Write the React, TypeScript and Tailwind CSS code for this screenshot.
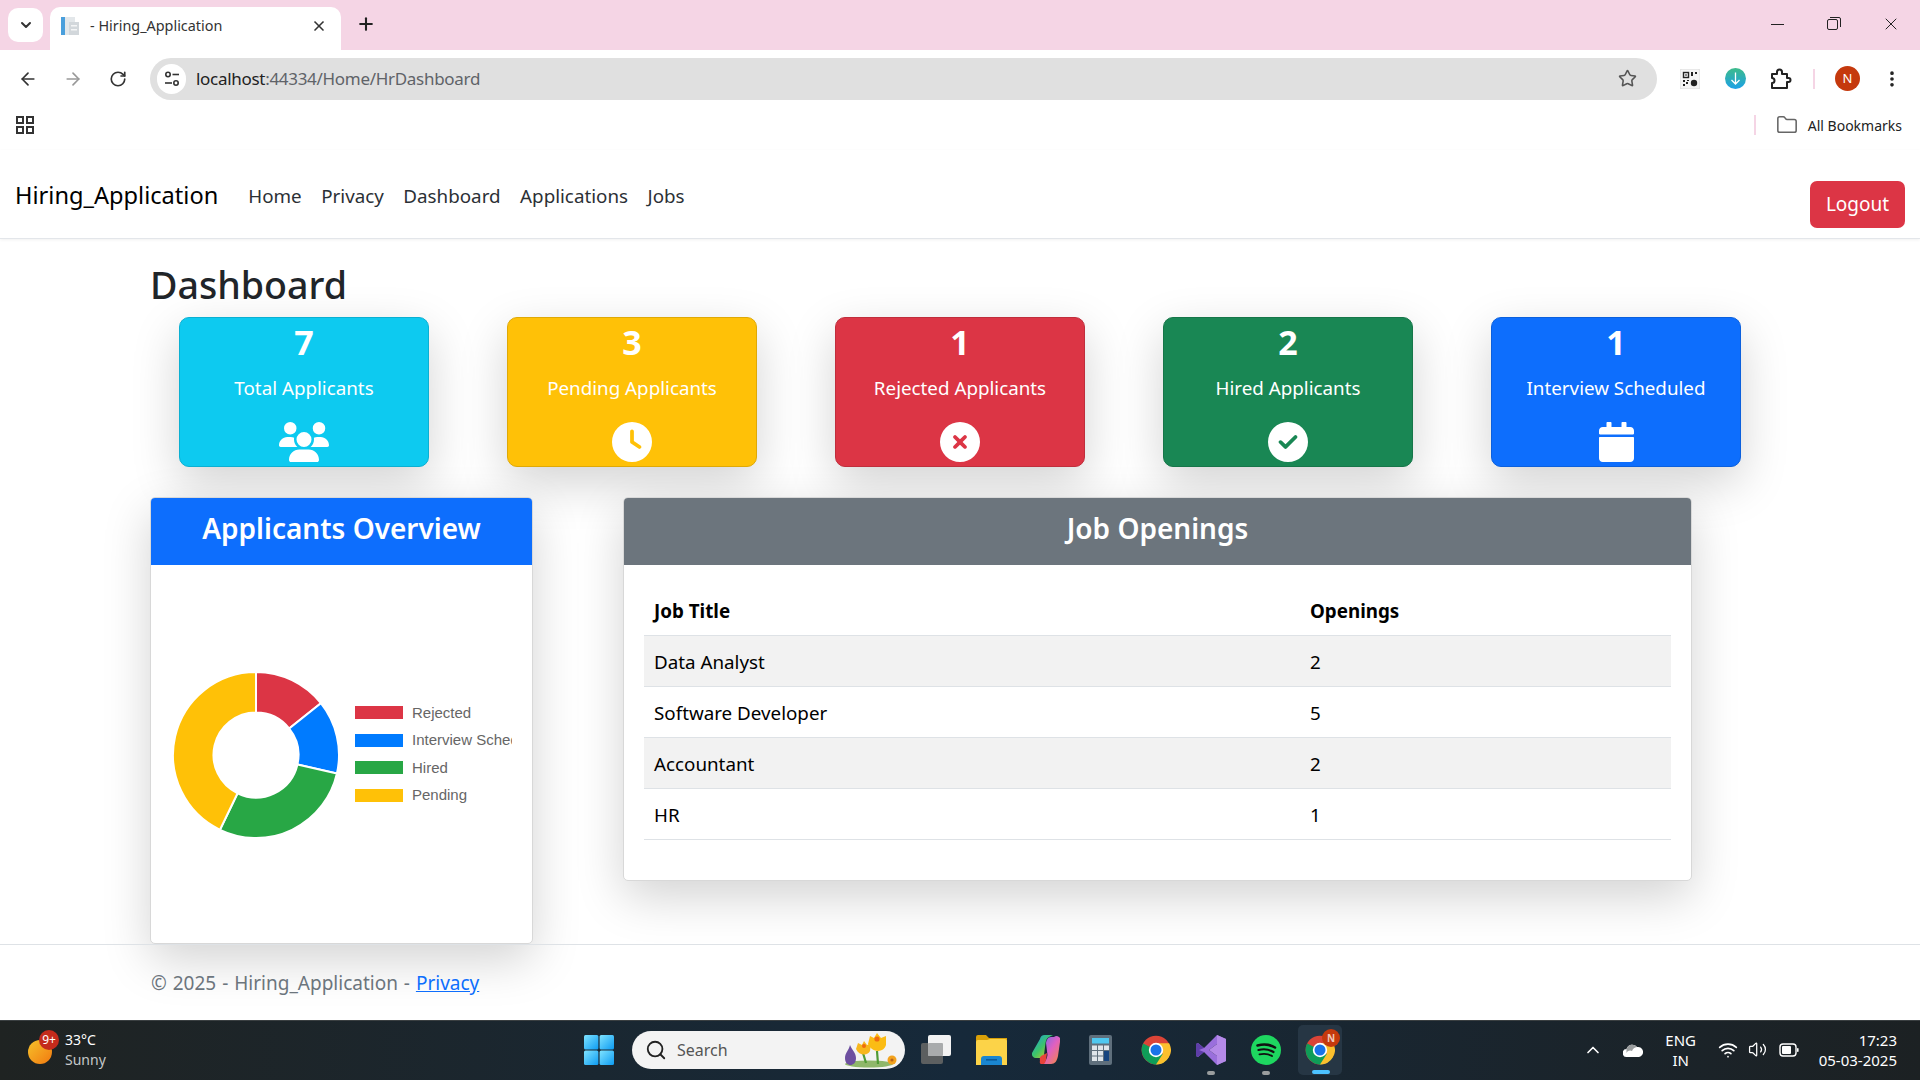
import React from 'react';
import { ArrowLeft, ArrowRight, RotateCw, Star, X, Plus, ChevronDown, ChevronUp, Folder, EllipsisVertical, Search, Wifi, Volume2 } from 'lucide-react';
import { FaCalendar } from 'react-icons/fa';
import { FaUsers, FaClock, FaCircleXmark, FaCircleCheck } from 'react-icons/fa6';

const stats = [
  { value: '7', label: 'Total Applicants', bg: 'bg-[#0dcaf0] border-[#0bb0d2]', icon: <FaUsers className="w-[50px] h-[40px]" /> },
  { value: '3', label: 'Pending Applicants', bg: 'bg-[#ffc107] border-[#dfa906]', icon: <FaClock className="w-[40px] h-[40px]" /> },
  { value: '1', label: 'Rejected Applicants', bg: 'bg-[#dc3545] border-[#c02e3c]', icon: <FaCircleXmark className="w-[40px] h-[40px]" /> },
  { value: '2', label: 'Hired Applicants', bg: 'bg-[#198754] border-[#167649]', icon: <FaCircleCheck className="w-[40px] h-[40px]" /> },
  { value: '1', label: 'Interview Scheduled', bg: 'bg-[#0d6efd] border-[#0b60dd]', icon: <FaCalendar className="w-[35px] h-[40px]" /> },
];

const jobs = [
  { title: 'Data Analyst', openings: 2 },
  { title: 'Software Developer', openings: 5 },
  { title: 'Accountant', openings: 2 },
  { title: 'HR', openings: 1 },
];

const legend = [
  { label: 'Rejected', color: 'bg-[#dc3545]' },
  { label: 'Interview Scheduled', color: 'bg-[#007bff]' },
  { label: 'Hired', color: 'bg-[#28a745]' },
  { label: 'Pending', color: 'bg-[#ffc107]' },
];

const slices = [
  { value: 1, color: '#dc3545' },
  { value: 1, color: '#007bff' },
  { value: 2, color: '#28a745' },
  { value: 3, color: '#ffc107' },
];

const polar = (r: number, a: number) => {
  const t = (a - 90) * (Math.PI / 180);
  return `${(84 + r * Math.cos(t)).toFixed(2)} ${(84 + r * Math.sin(t)).toFixed(2)}`;
};

const Donut = () => {
  let start = 0;
  return (
    <svg width="168" height="168" viewBox="0 0 168 168" className="shrink-0 mt-[1px]">
      {slices.map((s, i) => {
        const end = start + (s.value / 7) * 360;
        const large = end - start > 180 ? 1 : 0;
        const d = `M ${polar(83, start)} A 83 83 0 ${large} 1 ${polar(83, end)} L ${polar(42.5, end)} A 42.5 42.5 0 ${large} 0 ${polar(42.5, start)} Z`;
        start = end;
        return <path key={i} d={d} fill={s.color} stroke="#fff" strokeWidth="2" />;
      })}
    </svg>
  );
};

const ChromeLogo = ({ size = 30 }: { size?: number }) => (
  <svg width={size} height={size} viewBox="0 0 48 48">
    <circle cx="24" cy="24" r="23" fill="#db4437" />
    <path d="M24 24 L44 36 A23 23 0 0 1 13 44 Z" fill="#0f9d58" />
    <path d="M3.5 13.5 A23 23 0 0 0 24 47 L24 24 Z" fill="#0f9d58" />
    <path d="M24 13 H45 A23 23 0 0 1 24 47 L35 30 Z" fill="#fbc02d" />
    <circle cx="24" cy="24" r="11.5" fill="#fff" />
    <circle cx="24" cy="24" r="8.8" fill="#1a73e8" />
  </svg>
);

const WindowsLogo = () => (
  <svg width="30" height="30" viewBox="0 0 30 30">
    <defs>
      <linearGradient id="win" x1="0" y1="0" x2="1" y2="1">
        <stop offset="0" stopColor="#7fe3ff" />
        <stop offset="1" stopColor="#0d9bf2" />
      </linearGradient>
    </defs>
    <rect x="0" y="0" width="14.4" height="14.4" rx="1.5" fill="url(#win)" />
    <rect x="15.6" y="0" width="14.4" height="14.4" rx="1.5" fill="url(#win)" />
    <rect x="0" y="15.6" width="14.4" height="14.4" rx="1.5" fill="url(#win)" />
    <rect x="15.6" y="15.6" width="14.4" height="14.4" rx="1.5" fill="url(#win)" />
  </svg>
);

const TaskView = () => (
  <svg width="30" height="30" viewBox="0 0 30 30">
    <rect x="0" y="8" width="22" height="21" rx="2" fill="#5c5f60" />
    <rect x="7" y="0" width="23" height="21" rx="2" fill="#f2f2f2" />
    <rect x="7" y="8" width="15" height="13" rx="1" fill="#a9abac" />
  </svg>
);

const Explorer = () => (
  <svg width="31" height="30" viewBox="0 0 31 30">
    <path d="M0 2 a2 2 0 0 1 2-2 h8 l3 3 h18 v6 H0 Z" fill="#d9a008" />
    <path d="M0 7 a2 2 0 0 1 2-2 h9 l3-1 h15 a2 2 0 0 1 2 2 v24 H0 Z" fill="#fcd348" />
    <path d="M5 30 v-6 a3 3 0 0 1 3-3 h15 a3 3 0 0 1 3 3 v6 Z" fill="#1a86d0" />
    <rect x="10" y="24" width="11" height="1.6" fill="#0b5a9a" />
  </svg>
);

const Copilot = () => (
  <svg width="28" height="30" viewBox="0 0 28 30">
    <defs>
      <linearGradient id="cop1" x1="0" y1="0" x2="1" y2="1">
        <stop offset="0" stopColor="#18a0e8" />
        <stop offset="0.5" stopColor="#3dc468" />
        <stop offset="1" stopColor="#f5c518" />
      </linearGradient>
      <linearGradient id="cop2" x1="0" y1="0" x2="1" y2="1">
        <stop offset="0" stopColor="#6a6cf0" />
        <stop offset="0.5" stopColor="#e060c0" />
        <stop offset="1" stopColor="#f58a3a" />
      </linearGradient>
    </defs>
    <path d="M8 4 a5 5 0 0 1 5-4 h8 l-4 2 c-2 1-3 3-3.5 6 L12 20 c-.5 2-2 3-4 3 H4 a4 4 0 0 1-4-5 Z" fill="url(#cop1)" />
    <path d="M14 8 c.5-3 2-6 5-6 h3 a4 4 0 0 1 6 5 l-2 14 c-1 5-3 8-7 8 H9 l3-2 c2-1 3-4 3.5-7 Z" fill="url(#cop2)" />
    <path d="M8 26 a5 5 0 0 1 3-6 l4-2 -1 7 c-.5 2-1 3-2 4 h-2 a2 2 0 0 1-2-3 Z" fill="#e8433a" />
  </svg>
);

const Calculator = () => (
  <svg width="23" height="30" viewBox="0 0 23 30">
    <rect width="23" height="30" rx="2" fill="#5f6f7c" />
    <rect x="3" y="3" width="17" height="5.5" fill="#4fc8f0" />
    {[10.5, 16, 21.5].map(y => [3, 9, 15].map(x => (
      x === 15 && y > 12 ? null : <rect key={`${x}-${y}`} x={x} y={y} width="5" height="4.5" fill="#dfe5ea" />
    )))}
    <rect x="15" y="16" width="5" height="10" fill="#17457f" />
  </svg>
);

const VisualStudio = () => (
  <svg width="30" height="30" viewBox="0 0 30 30">
    <path d="M21 0 L30 4 V26 L21 30 L8 17 L2 22 L0 21 V9 L2 8 L8 13 Z M21 9 L13 15 L21 21 Z" fill="#9a6fdc" fillRule="evenodd" />
    <path d="M21 0 L30 4 V26 L21 30 Z M21 9 V21 L13 15 Z" fill="#b58ae8" fillRule="evenodd" />
    <path d="M2 8 L8 13 L3 15 L8 17 L2 22 L0 21 V9 Z" fill="#5e3ea8" />
  </svg>
);

const Spotify = () => (
  <svg width="30" height="30" viewBox="0 0 30 30" fill="none">
    <circle cx="15" cy="15" r="15" fill="#1ed760" />
    <path d="M6.5 10.5 C12 9 19 9.5 24 12.5" stroke="#111" strokeWidth="2.6" strokeLinecap="round" />
    <path d="M7.5 15 C12 13.8 18 14.3 22.5 17" stroke="#111" strokeWidth="2.2" strokeLinecap="round" />
    <path d="M8.5 19.4 C12.5 18.5 17.5 18.9 21 21" stroke="#111" strokeWidth="1.9" strokeLinecap="round" />
  </svg>
);

const Flowers = () => (
  <svg width="56" height="38" viewBox="0 0 56 38">
    <ellipse cx="25" cy="33" rx="24" ry="3.5" fill="#8fb76a" />
    <path d="M1 27 C1 22 5 19 6 14 C8 19 12 22 12 27 C12 32 9 34 6.5 34 C4 34 1 32 1 27 Z" fill="#6d4fa0" />
    <path d="M22 32 L19 22 M34 33 L33 20" stroke="#4f9a35" strokeWidth="2.2" />
    <path d="M12 18 L14 12 L18 14 L20 10 L23 14 L27 13 L26 20 C24 25 15 25 12 18 Z" fill="#f7b71d" />
    <circle cx="20" cy="15" r="2" fill="#ef6c10" />
    <path d="M24 13 L26 5 L30 7 L33 2 L37 7 L42 5 L42 14 C40 22 28 22 24 13 Z" fill="#fbbc14" />
    <circle cx="33" cy="8" r="2.6" fill="#ef6c10" />
    <circle cx="48" cy="29" r="4.5" fill="#f2a21e" />
    <circle cx="48" cy="29" r="1.6" fill="#b9641a" />
  </svg>
);

const TunePill = () => (
  <svg width="18" height="18" viewBox="0 0 18 18" fill="none" stroke="#333" strokeWidth="1.6">
    <circle cx="5" cy="4.5" r="2.2" />
    <path d="M9.5 4.5 H16" />
    <path d="M2 13 H9" />
    <circle cx="13" cy="13" r="2.2" />
  </svg>
);

const AppsGrid = () => (
  <svg width="18" height="18" viewBox="0 0 18 18" fill="none" stroke="#333" strokeWidth="2">
    <rect x="1" y="1" width="6" height="6" />
    <rect x="11" y="1" width="6" height="6" />
    <rect x="1" y="11" width="6" height="6" />
    <rect x="11" y="11" width="6" height="6" />
  </svg>
);

const Puzzle = () => (
  <svg width="22" height="22" viewBox="0 0 22 22" fill="none" stroke="#222" strokeWidth="2" strokeLinejoin="round">
    <path d="M2 6 H7 V4 a2.5 2.5 0 0 1 5 0 V6 H17 V10 h1.5 a2 2 0 0 1 0 4 H17 V20 H2 V15 a2.5 2.5 0 0 0 0-5 Z" />
  </svg>
);

const QrIcon = () => (
  <svg width="20" height="20" viewBox="0 0 20 20">
    <rect width="20" height="20" rx="2" fill="#f4f4f4" stroke="#ddd" />
    <rect x="3.5" y="3.5" width="5" height="5" fill="none" stroke="#222" strokeWidth="1.4" />
    <rect x="5.3" y="5.3" width="1.4" height="1.4" fill="#222" />
    <path d="M11 3h2v4h-2z M15 3h2v2h-2z M3 11h2v2H3z M6 13h2v2H6z M3 15h2v2H3z M7 11h2v1H7z" fill="#222" />
    <circle cx="14" cy="14" r="3.2" fill="#222" />
  </svg>
);

const DownloadIcon = () => (
  <svg width="21" height="21" viewBox="0 0 21 21" fill="none">
    <defs>
      <linearGradient id="dl" x1="0" y1="0" x2="0" y2="1">
        <stop offset="0" stopColor="#3dbb8a" />
        <stop offset="1" stopColor="#1da1e8" />
      </linearGradient>
    </defs>
    <circle cx="10.5" cy="10.5" r="10.5" fill="url(#dl)" />
    <path d="M10.5 4.5 V16 M6.5 12 L10.5 16 L14.5 12" stroke="#fff" strokeWidth="1.3" />
  </svg>
);

const Favicon = () => (
  <svg width="20" height="20" viewBox="0 0 20 20">
    <rect x="1" y="1" width="4" height="18" fill="#4a9fdc" />
    <rect x="5" y="1" width="10" height="18" fill="#e3e7ea" />
    <rect x="9" y="6" width="10" height="13" fill="#d2d7db" />
    <rect x="11" y="9" width="6" height="1.5" fill="#f4f5f6" />
    <rect x="11" y="13" width="6" height="1.5" fill="#f4f5f6" />
  </svg>
);

const Cloud = () => (
  <svg width="20" height="14" viewBox="0 0 20 14">
    <path d="M4 14 a4 4 0 0 1-.5-8 A6 6 0 0 1 14 4 a4.5 4.5 0 0 1 2 10 Z" fill="#fff" />
    <path d="M3.5 6 A6 6 0 0 1 14 4 a6 6 0 0 0-5 4 a4 4 0 0 0-5.5 2 Z" fill="#9a9d9e" />
  </svg>
);

const Battery = () => (
  <svg width="20" height="14" viewBox="0 0 20 14" fill="none">
    <rect x="1" y="1" width="16" height="12" rx="3" stroke="#fff" strokeWidth="1.4" />
    <rect x="3" y="3" width="9" height="8" rx="1" fill="#fff" />
    <rect x="18" y="5" width="1.6" height="4" rx="0.8" fill="#fff" />
  </svg>
);

const App: React.FC = () => {
  return (
    <div className="h-screen flex flex-col overflow-hidden bg-white text-[#212529] font-['Noto_Sans',sans-serif]">
      {/* browser tab strip */}
      <div className="h-[50px] shrink-0 bg-[#f5d5e5] flex items-end">
        <div className="w-[35px] h-[34px] ml-2 mb-2 bg-white rounded-[10px] flex items-center justify-center">
          <ChevronDown size={16} strokeWidth={3} color="#333" />
        </div>
        <div className="w-[291px] h-[43px] ml-[7px] bg-white rounded-t-[10px] flex items-center pl-[10px] pr-[14px] pb-[6px]">
          <Favicon />
          <span className="ml-[10px] text-[14.4px] text-[#333] flex-1">- Hiring_Application</span>
          <X size={16} strokeWidth={2.5} color="#333" />
        </div>
        <Plus size={20} strokeWidth={2.5} color="#222" className="ml-[15px] mb-[16px]" />
        <div className="ml-auto flex items-center mb-[16px] text-[#222]">
          <span className="w-[13px] h-px bg-[#222]" />
          <svg width="14" height="14" viewBox="0 0 14 14" fill="none" stroke="#222" className="ml-[43px]">
            <rect x="0.5" y="2.5" width="10" height="10" rx="1.5" />
            <path d="M3 .5 H12 a1.5 1.5 0 0 1 1.5 1.5 V10" />
          </svg>
          <X size={20} strokeWidth={1.2} className="ml-[40px] mr-[19px]" />
        </div>
      </div>

      {/* toolbar */}
      <div className="h-[50px] shrink-0 bg-white rounded-t-[10px] flex items-center pt-[7px]">
        <ArrowLeft size={20} strokeWidth={2} color="#333" className="ml-[18px]" />
        <ArrowRight size={20} strokeWidth={2} color="#999" className="ml-[25px]" />
        <RotateCw size={18} strokeWidth={2.2} color="#333" className="ml-[26px]" />
        <div className="ml-[23px] w-[1507px] h-[42px] rounded-full bg-[#e0e0e0] flex items-center pl-[7px] pr-[20px]">
          <span className="w-[29px] h-[30px] rounded-full bg-white flex items-center justify-center"><TunePill /></span>
          <span className="ml-[10px] text-[17px] tracking-[-0.3px] text-[#222]">localhost<span className="text-[#5f6368]">:44334/Home/HrDashboard</span></span>
          <Star size={19} strokeWidth={2} color="#555" className="ml-auto" />
        </div>
        <span className="ml-[23px]"><QrIcon /></span>
        <span className="ml-[25px]"><DownloadIcon /></span>
        <span className="ml-[24px]"><Puzzle /></span>
        <span className="ml-[21px] w-[2px] h-5 bg-[#f5d5e5]" />
        <span className="ml-[20px] w-[25px] h-[25px] rounded-full bg-[#c5390d] text-white text-[13px] flex items-center justify-center">N</span>
        <EllipsisVertical size={20} strokeWidth={2.4} color="#222" className="ml-[22px]" />
      </div>

      {/* bookmarks bar */}
      <div className="h-[50px] shrink-0 bg-white flex items-center">
        <span className="ml-[16px]"><AppsGrid /></span>
        <span className="ml-auto w-[2px] h-5 bg-[#f5d5e5]" />
        <Folder size={22} strokeWidth={1.7} color="#666" className="ml-[20px]" />
        <span className="ml-[10px] mr-[18px] text-[14px] text-[#222]">All Bookmarks</span>
      </div>

      {/* site navbar */}
      <nav className="h-[89px] shrink-0 bg-white border-b border-[#e3e6ea] shadow-[0_1px_3px_rgba(0,0,0,0.06)] flex items-center pl-[15px] pr-[15px]">
        <span className="text-[23.6px] text-black mr-[30px] mt-[3px]">Hiring_Application</span>
        <div className="flex gap-[19.5px] text-[18.8px] text-[#2b3035] mt-[5px]">
          <span>Home</span>
          <span>Privacy</span>
          <span>Dashboard</span>
          <span>Applications</span>
          <span>Jobs</span>
        </div>
        <button className="ml-auto w-[95px] h-[47px] mt-[20px] bg-[#dc3545] rounded-[7px] text-white text-[19px]">Logout</button>
      </nav>

      {/* page body */}
      <main className="flex-1 min-h-0 pl-[150px]">
        <h1 className="text-[37.6px] leading-[48px] font-medium pt-[22px] box-content mb-[8px]">Dashboard</h1>

        <div className="flex gap-[78px] ml-[29px]">
          {stats.map((s, i) => (
            <div key={i} className={`w-[250px] h-[150px] rounded-[10px] border text-white flex flex-col items-center shadow-[0_16px_48px_rgba(0,0,0,0.175)] ${s.bg}`}>
              <div className="text-[34px] leading-[42px] font-bold pt-[3px] box-content">{s.value}</div>
              <div className="text-[18.8px] leading-[30px] mt-[10px]">{s.label}</div>
              <div className="mt-[19px] h-[40px] flex items-center">{s.icon}</div>
            </div>
          ))}
        </div>

        <div className="flex gap-[90px] mt-[30px] items-start">
          <section className="w-[383px] h-[447px] bg-white rounded-[5px] border border-[#d8d8d8] shadow-[0_16px_48px_rgba(0,0,0,0.175)] overflow-hidden flex flex-col">
            <div className="h-[67px] shrink-0 bg-[#0d6efd] text-white text-[28px] font-semibold flex items-center justify-center pb-[8px]">Applicants Overview</div>
            <div className="flex-1 flex items-center pl-[21px]">
              <Donut />
              <div className="ml-[15px] w-[157px] overflow-hidden flex flex-col gap-[9.5px] font-['Liberation_Sans',sans-serif] text-[15px] leading-[18px] text-[#666] whitespace-nowrap">
                {legend.map(l => (
                  <div key={l.label} className="flex items-center">
                    <span className={`w-[48px] h-[13px] shrink-0 mr-[9px] ${l.color}`} />
                    {l.label}
                  </div>
                ))}
              </div>
            </div>
          </section>

          <section className="w-[1069px] h-[384px] bg-white rounded-[5px] border border-[#d8d8d8] shadow-[0_16px_48px_rgba(0,0,0,0.175)] overflow-hidden">
            <div className="h-[67px] bg-[#6c757d] text-white text-[28px] font-semibold flex items-center justify-center pb-[8px]">Job Openings</div>
            <div className="px-[20px] pt-[20px]">
              <table className="w-full text-[18.8px] text-black border-collapse">
                <thead>
                  <tr className="h-[50px] border-b border-[#dee2e6] text-left">
                    <th className="w-[656px] pl-[10px] pt-[2px] font-bold">Job Title</th>
                    <th className="pl-[10px] pt-[2px] font-bold">Openings</th>
                  </tr>
                </thead>
                <tbody>
                  {jobs.map((j, i) => (
                    <tr key={j.title} className={`h-[51px] border-b border-[#dee2e6] ${i % 2 === 0 ? 'bg-[#f2f2f2]' : 'bg-white'}`}>
                      <td className="pl-[10px] pt-[3px]">{j.title}</td>
                      <td className="pl-[10px] pt-[3px]">{j.openings}</td>
                    </tr>
                  ))}
                </tbody>
              </table>
            </div>
          </section>
        </div>
      </main>

      {/* site footer */}
      <footer className="h-[76px] shrink-0 border-t border-[#dee2e6] pl-[151px] pt-[2px] flex items-center text-[19px] text-[#6c757d]">
        <span className="whitespace-pre [word-spacing:1px]">© 2025 - Hiring_Application - </span>
        <a className="text-[#0d6efd] underline">Privacy</a>
      </footer>

      {/* windows taskbar */}
      <div className="h-[60px] shrink-0 border-t border-[#3a3f41] bg-gradient-to-r from-[#1f2322] via-[#16293a] to-[#1c2123] flex items-center pb-[2px] text-white">
        <div className="flex items-center ml-[28px] w-[556px]">
          <div className="relative w-[24px] h-[24px] mt-[5px] rounded-full bg-gradient-to-br from-[#f5c12a] to-[#f0780f]">
            <span className="absolute -top-[10px] left-[11px] w-[20px] h-[20px] rounded-full bg-[#c42b1c] text-[12px] leading-[20px] text-center">9+</span>
          </div>
          <div className="ml-[13px] text-[14px] leading-[20px]">
            <div>33°C</div>
            <div className="text-[#c5c8c9]">Sunny</div>
          </div>
        </div>
        <WindowsLogo />
        <div className="ml-[18px] w-[273px] h-[38px] rounded-full bg-[#f3f3f3] flex items-center pl-[13px] pr-[5px]">
          <Search size={22} strokeWidth={2} color="#222" />
          <span className="ml-[10px] text-[16px] text-[#555]">Search</span>
          <span className="ml-auto"><Flowers /></span>
        </div>
        <div className="ml-[16px] flex items-center">
          <TaskView />
          <span className="ml-[25px]"><Explorer /></span>
          <span className="ml-[25px]"><Copilot /></span>
          <span className="ml-[29px]"><Calculator /></span>
          <span className="ml-[29px]"><ChromeLogo /></span>
          <span className="ml-[25px] relative"><VisualStudio /><span className="absolute -bottom-[10px] left-[11px] w-2 h-[4px] rounded bg-[#9a9d9e]" /></span>
          <span className="ml-[25px] relative"><Spotify /><span className="absolute -bottom-[10px] left-[11px] w-2 h-[4px] rounded bg-[#9a9d9e]" /></span>
          <span className="ml-[17px] w-[44px] h-[50px] rounded-[5px] bg-[#263644] flex items-center justify-center relative">
            <ChromeLogo />
            <span className="absolute top-[4px] right-[2px] w-[18px] h-[18px] rounded-full bg-[#c5390d] text-[10px] font-bold leading-[18px] text-center text-[#f2c9b8]">N</span>
            <span className="absolute bottom-[1px] left-[14px] w-[18px] h-[4px] rounded bg-[#4cc2ff]" />
          </span>
        </div>
        <div className="ml-auto flex items-center mr-[23px]">
          <ChevronUp size={20} strokeWidth={2} />
          <span className="ml-[20px]"><Cloud /></span>
          <div className="ml-[22px] w-[32px] text-[15px] leading-[20px] text-center"><div>ENG</div><div>IN</div></div>
          <Wifi size={20} strokeWidth={2} className="ml-[21px]" />
          <Volume2 size={19} strokeWidth={1.6} className="ml-[10px]" />
          <span className="ml-[12px]"><Battery /></span>
          <div className="ml-[20px] text-[15px] leading-[20px] text-right"><div>17:23</div><div>05-03-2025</div></div>
        </div>
      </div>
    </div>
  );
};

export default App;
